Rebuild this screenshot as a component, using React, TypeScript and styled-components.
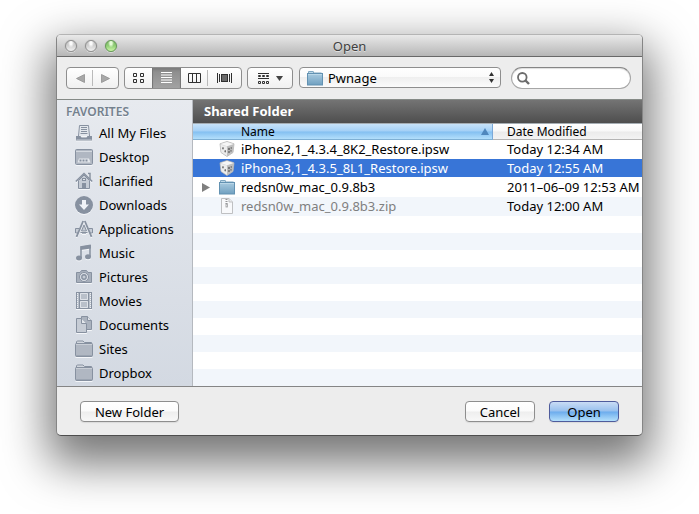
import React from "react";
import styled, { createGlobalStyle, css } from "styled-components";

const GlobalStyle = createGlobalStyle`
  * { box-sizing: border-box; }
  body { margin: 0; background: #fff; }
  body, button, input, select, table {
    font-family: "Lucida Grande", "Noto Sans", "Open Sans", sans-serif;
    font-size: 13px;
    line-height: 16px;
    color: #000;
  }
`;

const Page = styled.main`
  padding: 34px 56px 78px;
  overflow: hidden;
`;

const Dialog = styled.section`
  border: 1px solid #858585;
  border-top-color: #b4b4b4;
  border-bottom-color: #4e4e4e;
  border-radius: 5px;
  background: #ededed;
  overflow: hidden;
  box-shadow: 0 20px 46px 8px rgba(0, 0, 0, 0.54);
`;

const TitleBar = styled.header`
  display: grid;
  grid-template-columns: 1fr auto 1fr;
  align-items: center;
  height: 22px;
  padding: 0 8px;
  border-bottom: 1px solid #686868;
  background: linear-gradient(#e9e9e9, #b6b6b6);
`;

const Lights = styled.div`
  display: flex;
  gap: 8px;
`;

const Light = styled.button<{ $green?: boolean }>`
  width: 12px;
  height: 12px;
  padding: 0;
  border: 1px solid ${(p) => (p.$green ? "#639a54" : "#8f8f8f")};
  border-radius: 50%;
  background: ${(p) =>
    p.$green
      ? "radial-gradient(ellipse at 50% 20%, #e4fbd6 0 15%, transparent 42%), linear-gradient(#7db567, #92d077 50%, #cdf7a8)"
      : "radial-gradient(ellipse at 50% 20%, #fbfbfb 0 15%, transparent 42%), linear-gradient(#c0c0c0, #d2d2d2 50%, #f2f2f2)"};
  box-shadow: 0 0 1px rgba(0, 0, 0, 0.35), 0 1px 0 rgba(255, 255, 255, 0.5);
`;

const Title = styled.h1`
  margin: 0;
  font-size: 13px;
  font-weight: 400;
  line-height: 20px;
  color: #404040;
  text-shadow: 0 1px 0 rgba(255, 255, 255, 0.5);
`;

const Toolbar = styled.div`
  display: flex;
  align-items: flex-start;
  gap: 5px;
  height: 43px;
  padding: 10px 11px 0 9px;
  border-bottom: 1px solid #858a86;
`;

const Group = styled.div`
  display: flex;
  height: 22px;
  border: 1px solid #8e8e8e;
  border-radius: 4px;
  background: linear-gradient(#fff, #f0f0f0);
  overflow: hidden;
`;

const Segment = styled.button<{ $width: number; $on?: boolean; $rule?: boolean }>`
  display: flex;
  align-items: center;
  justify-content: center;
  gap: 7px;
  width: ${(p) => p.$width}px;
  padding: 0;
  border: 0;
  background: none;
  ${(p) =>
    p.$rule &&
    css`
      background: linear-gradient(#bababa, #bababa) right center / 1px 16px no-repeat;
    `}
  ${(p) =>
    p.$on &&
    css`
      background: linear-gradient(#8a8a8a, #a2a2a2);
      box-shadow: inset 1px 0 0 #777, inset -1px 0 0 #777, inset 0 2px 2px #7c7c7c;
    `}
`;

const PopUp = styled.div`
  display: grid;
  flex: 1;
  align-items: center;
  margin: 0 5px 0 1px;
  > * { grid-area: 1 / 1; }
  > svg { pointer-events: none; margin-left: 8px; }
  > svg:last-child { justify-self: end; margin-right: 6px; }
`;

const PopUpSelect = styled.select`
  appearance: none;
  width: 100%;
  height: 21px;
  padding: 0 22px 0 28px;
  border: 1px solid #8e8e8e;
  border-radius: 4px;
  background: linear-gradient(#fff, #fafafa 50%, #efefef 50%, #fbfbfb);
`;

const Search = styled.label`
  display: flex;
  align-items: center;
  gap: 4px;
  width: 120px;
  height: 22px;
  padding: 0 8px 0 5px;
  border: 1px solid #a6a6a6;
  border-top-color: #858585;
  border-radius: 11px;
  background: #fff;
  box-shadow: inset 0 1px 1px #ddd;
`;

const SearchInput = styled.input`
  flex: 1;
  min-width: 0;
  padding: 0;
  border: 0;
  outline: 0;
  background: none;
`;

const Panes = styled.div`
  display: flex;
  border-bottom: 1px solid #858585;
`;

const Sidebar = styled.nav`
  flex: none;
  width: 136px;
  padding-bottom: 1px;
  border-right: 1px solid #b5b9bf;
  background: linear-gradient(#e7eaef, #d3d9e2);
`;

const SidebarHeading = styled.h2`
  margin: 0;
  padding: 4px 0 1px 9px;
  font-size: 12px;
  font-weight: 600;
  line-height: 16px;
  color: #74818e;
  text-shadow: 0 1px 0 #f6f8fa;
`;

const Places = styled.ul`
  margin: 0;
  padding: 0;
  list-style: none;
`;

const Place = styled.a`
  display: flex;
  align-items: center;
  gap: 6px;
  height: 24px;
  padding-left: 18px;
  color: #000;
  text-decoration: none;
  svg { filter: drop-shadow(0 1px 0 #f4f6f9); }
`;

const Browser = styled.div`
  display: flex;
  flex: 1;
  min-width: 0;
  flex-direction: column;
  background: #fff;
`;

const BrowserTitle = styled.h2`
  margin: 0;
  padding: 0 11px;
  font-size: 13px;
  font-weight: 700;
  line-height: 23px;
  color: #fff;
  background: linear-gradient(#747474, #4e4e4e);
`;

const Files = styled.table`
  width: 100%;
  table-layout: fixed;
  border-collapse: separate;
  border-spacing: 0;
  th, td { padding: 0; text-align: left; white-space: nowrap; overflow: hidden; }
`;

const HeadCell = styled.th<{ $sorted?: boolean }>`
  height: 17px;
  border-top: 1px solid #a5adb3;
  border-bottom: 1px solid ${(p) => (p.$sorted ? "#7fb0d4" : "#b4b4b4")};
  font-size: 12px;
  font-weight: 400;
  line-height: 15px;
  background: ${(p) =>
    p.$sorted
      ? "linear-gradient(#c7e2f8, #a3d0f6 48%, #83bff1 52%, #b3dffb)"
      : "linear-gradient(#fff, #f8f8f8 48%, #ebebeb 52%, #f3f3f3)"};
`;

const HeadInner = styled.div<{ $name?: boolean }>`
  display: flex;
  align-items: center;
  justify-content: space-between;
  height: 15px;
  padding: ${(p) => (p.$name ? "0 3px 0 48px" : "0 0 0 14px")};
  ${(p) => p.$name && "border-right: 1px solid #7ba9d8;"}
`;

const NameColumn = styled.col`
  width: 300px;
`;

const FileRow = styled.tr<{ $selected?: boolean; $shaded?: boolean }>`
  height: 19px;
  color: ${(p) => (p.$selected ? "#fff" : "#000")};
  td {
    height: 19px;
    border-bottom: 1px solid ${(p) => (p.$shaded ? "#f2f6fb" : "#fff")};
    background: ${(p) => (p.$selected ? "#3875d7" : p.$shaded ? "#f2f6fb" : "#fff")};
  }
`;

const NameCell = styled.div<{ $dim?: boolean }>`
  display: flex;
  align-items: center;
  height: 18px;
  padding-left: 9px;
  color: ${(p) => (p.$dim ? "#7f7f7f" : "inherit")};
  > svg { flex: none; margin-right: 6px; opacity: ${(p) => (p.$dim ? 0.6 : 1)}; }
`;

const Disclosure = styled.button`
  display: flex;
  flex: none;
  width: 8px;
  margin-right: 9px;
  padding: 0;
  border: 0;
  background: none;
`;

const Indent = styled.span`
  flex: none;
  width: 17px;
`;

const DateCell = styled.td`
  && { padding-left: 14px; }
`;

const Stripes = styled.div`
  flex: 1;
  background: repeating-linear-gradient(#fff 0 17px, #f2f6fb 17px 34px);
`;

const Footer = styled.footer`
  display: flex;
  gap: 14px;
  height: 48px;
  padding: 14px 23px 0;
`;

const PushButton = styled.button<{ $primary?: boolean; $wide?: boolean }>`
  width: ${(p) => (p.$wide ? 99 : 70)}px;
  height: 21px;
  padding: 0;
  border: 1px solid ${(p) => (p.$primary ? "#4f5c9c" : "#8e8e8e")};
  border-radius: 4px;
  line-height: 18px;
  background: ${(p) =>
    p.$primary
      ? "linear-gradient(#c9dcf5, #97c0ee 48%, #6caced 52%, #b4e0fb)"
      : "linear-gradient(#fff, #fbfbfb 48%, #eeeeee 52%, #f8f8f8)"};
  box-shadow: 0 1px 1px rgba(0, 0, 0, 0.08);
  ${(p) => p.$wide && "margin-right: auto;"}
`;

const INK = "#8791a0";

const Gray = ({ children }: { children: React.ReactNode }) => (
  <svg width="18" height="18" viewBox="0 0 18 18" fill="none" stroke={INK} aria-hidden="true">
    {children}
  </svg>
);

const GrayFolder = () => (
  <Gray>
    <path d="M1.5 4V1.8L2.2 1H8L9.5 2.5H16.5V4" fill="#d2d7de" />
    <rect x="0.5" y="3.5" width="17" height="13" rx="0.8" fill="#b0b7c2" />
    <path d="M1 4.5H17" stroke="#c9ced6" />
    <path d="M1 16H17" />
  </Gray>
);

const places: { name: string; icon: React.ReactNode }[] = [
  {
    name: "All My Files",
    icon: (
      <Gray>
        <path d="M3.5 12L4.5 1.5H13.5L14.5 12" fill="#e3e7ec" />
        <path d="M6 3.5H12M6 5.5H12M6 7.5H12M5.5 9.5H12.5" />
        <path d="M1 12H5.5L6.5 13.5H11.5L12.5 12H17V16.5H1Z" fill={INK} stroke="none" />
        <path d="M1.5 15.5H16.5" stroke="#a7afbb" />
      </Gray>
    ),
  },
  {
    name: "Desktop",
    icon: (
      <Gray>
        <rect x="0.5" y="1.5" width="17" height="15" rx="1" fill="#b0b7c2" />
        <path d="M1 3.5H17" stroke="#d3d8df" />
        <path d="M4 10.5H14L15.5 14.5H2.5Z" fill="#e3e7ec" stroke="none" />
        <path d="M4.5 12.5H13.5" strokeWidth="2" strokeDasharray="2 1" />
      </Gray>
    ),
  },
  {
    name: "iClarified",
    icon: (
      <Gray>
        <path d="M13 1.5H15V7" strokeWidth="1.5" />
        <path d="M3.5 8.5L9 3L14.5 8.5V16.5H3.5Z" fill="#c6ccd5" />
        <path d="M0.8 9.5L9 1.5L17.2 9.5" strokeWidth="1.6" />
        <rect x="7.5" y="6.5" width="3" height="2" fill="#e3e7ec" />
        <rect x="7" y="11" width="4" height="6" fill={INK} stroke="none" />
      </Gray>
    ),
  },
  {
    name: "Downloads",
    icon: (
      <Gray>
        <circle cx="9" cy="9" r="9" fill={INK} stroke="none" />
        <path d="M7 4H11V8.5H14L9 14L4 8.5H7Z" fill="#f0f3f7" stroke="none" />
      </Gray>
    ),
  },
  {
    name: "Applications",
    icon: (
      <Gray>
        <path d="M4 8.5H0.5V13H3M14 8.5H17.5V13H15M5.5 12.5H12.5" fill="#c6ccd5" />
        <path d="M8.2 1L1.5 16.8M9.8 1L16.5 16.8" strokeWidth="1.8" />
        <path d="M9 5L11.5 11H6.5Z" fill="#c6ccd5" />
        <path d="M7 13.5H11" stroke="#b0b7c2" />
      </Gray>
    ),
  },
  {
    name: "Music",
    icon: (
      <Gray>
        <path d="M6 14V3L15 1.5V12.5" strokeWidth="1.6" />
        <path d="M5.5 2.5L16 1V4.5L5.5 6Z" fill={INK} stroke="none" />
        <ellipse cx="4" cy="14" rx="3" ry="2.5" fill={INK} stroke="none" />
        <ellipse cx="13" cy="12.7" rx="3" ry="2.5" fill={INK} stroke="none" />
      </Gray>
    ),
  },
  {
    name: "Pictures",
    icon: (
      <Gray>
        <path d="M1.5 4.5H5L6.5 2.5H11.5L13 4.5H16.5V14.5H1.5Z" fill="#a7afbb" strokeLinejoin="round" />
        <circle cx="9" cy="9" r="4.5" fill="#dfe3e9" />
        <circle cx="9" cy="9" r="2.2" fill="#c6ccd5" strokeWidth="1.4" />
      </Gray>
    ),
  },
  {
    name: "Movies",
    icon: (
      <Gray>
        <rect x="1.5" y="0.5" width="15" height="16" fill="#b9c0ca" />
        <path d="M2.5 1V16.5M15.5 1V16.5" stroke="#eef1f5" strokeDasharray="1 1" />
        <path d="M4.5 1V16M13.5 1V16M4 8.5H14" />
        <path d="M5.5 1.5H12.5V7.5H5.5ZM5.5 9.5H12.5V15.5H5.5Z" stroke="#dfe3e9" />
      </Gray>
    ),
  },
  {
    name: "Documents",
    icon: (
      <Gray>
        <path d="M6.5 0.5H12.5L16.5 4.5V13.5H6.5Z" fill="#aab2be" />
        <path d="M12.5 0.5V4.5H16.5" fill="#dfe3e9" />
        <path d="M1.5 2.5H6.5L11.5 7.5V16.5H1.5Z" fill="#c6ccd5" />
        <path d="M6.5 2.5V7.5H11.5" fill="#e3e7ec" />
      </Gray>
    ),
  },
  { name: "Sites", icon: <GrayFolder /> },
  { name: "Dropbox", icon: <GrayFolder /> },
];

const BlueFolder = () => (
  <svg width="16" height="16" viewBox="0 0 16 16" aria-hidden="true">
    <defs>
      <linearGradient id="folderFront" x1="0" y1="0" x2="0" y2="1">
        <stop offset="0" stopColor="#a9cbe0" />
        <stop offset="1" stopColor="#70a0c0" />
      </linearGradient>
    </defs>
    <path d="M1 4V2Q1 1 2 1H6Q7 1 7 2.5H14.5V5H1Z" fill="#80a8c2" />
    <path d="M2 2.5H6" stroke="#bdd8e8" />
    <rect x="0.5" y="3.5" width="15" height="11.5" fill="url(#folderFront)" stroke="#6392b2" />
    <path d="M1 4.5H15" stroke="#bad7e8" />
  </svg>
);

const Firmware = () => (
  <svg width="16" height="16" viewBox="0 0 16 16" aria-hidden="true">
    <path d="M8 0.5L15 2.8L14 11.5L8 15.5L2 11.5L1 2.8Z" fill="#d2d2d2" stroke="#b5b5b5" strokeWidth="0.8" />
    <path d="M8 1L14.5 3L8 5.3L1.5 3Z" fill="#f6f6f6" />
    <path d="M1.5 3.5L8 5.5V15L2.4 11.2Z" fill="#ececec" />
    <path d="M14.5 3.5L8 5.5V15L13.6 11.2Z" fill="#bebebe" />
    <ellipse cx="4" cy="7.2" rx="0.7" ry="1.2" fill="#666" />
    <ellipse cx="6.2" cy="10.2" rx="0.7" ry="1.2" fill="#666" />
    <ellipse cx="10" cy="8" rx="0.7" ry="1.2" fill="#444" />
    <ellipse cx="12.2" cy="7" rx="0.6" ry="1.1" fill="#666" />
    <ellipse cx="10" cy="11" rx="0.7" ry="1.1" fill="#444" />
    <ellipse cx="12" cy="9.8" rx="0.6" ry="1.1" fill="#666" />
  </svg>
);

const Archive = () => (
  <svg width="16" height="16" viewBox="0 0 16 16" fill="none" stroke="#9d9d9d" aria-hidden="true">
    <path d="M2.5 0.5H10L13.5 4V15.5H2.5Z" fill="#fcfcfc" />
    <path d="M10 0.5V4H13.5" fill="#e8e8e8" />
    <path d="M7.5 1V7" stroke="#555" strokeWidth="2" strokeDasharray="1 1" />
    <rect x="7" y="6" width="1.5" height="3" stroke="#666" strokeWidth="0.8" />
  </svg>
);

const files = [
  { name: "iPhone2,1_4.3.4_8K2_Restore.ipsw", date: "Today 12:34 AM", icon: <Firmware /> },
  { name: "iPhone3,1_4.3.5_8L1_Restore.ipsw", date: "Today 12:55 AM", icon: <Firmware />, selected: true },
  { name: "redsn0w_mac_0.9.8b3", date: "2011–06–09 12:53 AM", icon: <BlueFolder />, folder: true },
  { name: "redsn0w_mac_0.9.8b3.zip", date: "Today 12:00 AM", icon: <Archive />, dim: true, shaded: true },
];

export default function App() {
  return (
    <>
      <GlobalStyle />
      <Page>
        <Dialog role="dialog" aria-labelledby="dialog-title">
          <TitleBar>
            <Lights>
              <Light aria-label="Close" />
              <Light aria-label="Minimize" />
              <Light aria-label="Zoom" $green />
            </Lights>
            <Title id="dialog-title">Open</Title>
          </TitleBar>

          <Toolbar>
            <Group>
              <Segment $width={26} $rule aria-label="Back">
                <svg width="9" height="9" viewBox="0 0 9 9"><path d="M0.5 4.5L8.5 0.5V8.5Z" fill="#a8a8a8" stroke="#909090" strokeWidth="0.8" /></svg>
              </Segment>
              <Segment $width={25} aria-label="Forward">
                <svg width="9" height="9" viewBox="0 0 9 9"><path d="M8.5 4.5L0.5 0.5V8.5Z" fill="#a8a8a8" stroke="#909090" strokeWidth="0.8" /></svg>
              </Segment>
            </Group>
            <Group>
              <Segment $width={27} aria-label="Icons">
                <svg width="11" height="10" viewBox="0 0 11 10" fill="none" stroke="#303030">
                  <path d="M0.5 0.5H3.5V3.5H0.5ZM7.5 0.5H10.5V3.5H7.5ZM0.5 6.5H3.5V9.5H0.5ZM7.5 6.5H10.5V9.5H7.5Z" />
                </svg>
              </Segment>
              <Segment $width={29} $on aria-label="List" aria-pressed="true">
                <svg width="11" height="12" viewBox="0 0 11 12" stroke="#fff">
                  <path d="M0 0.5H11M0 3H11M0 5.5H11M0 8H11M0 10.5H11" />
                </svg>
              </Segment>
              <Segment $width={27} $rule aria-label="Columns">
                <svg width="13" height="10" viewBox="0 0 13 10" fill="none" stroke="#303030">
                  <path d="M0.5 0.5H12.5V9.5H0.5ZM4.5 0V10M8.5 0V10" />
                </svg>
              </Segment>
              <Segment $width={33} aria-label="Cover Flow">
                <svg width="15" height="10" viewBox="0 0 15 10" fill="none" stroke="#303030">
                  <path d="M0.5 0V10M2.5 1V9M12.5 1V9M14.5 0V10" />
                  <rect x="4.5" y="1.5" width="6" height="7" fill="#6a6a6a" />
                </svg>
              </Segment>
            </Group>
            <Group>
              <Segment $width={44} aria-label="Arrange">
                <svg width="11" height="11" viewBox="0 0 11 11" fill="none" stroke="#303030">
                  <path d="M0 0.5H11M0 5.5H11" />
                  <path d="M0.5 2.5H2.5V3.5H0.5ZM4.5 2.5H6.5V3.5H4.5ZM8.5 2.5H10.5V3.5H8.5ZM0.5 8.5H2.5V10.5H0.5ZM4.5 8.5H6.5V10.5H4.5ZM8.5 8.5H10.5V10.5H8.5Z" />
                </svg>
                <svg width="7" height="5" viewBox="0 0 7 5"><path d="M0 0H7L3.5 5Z" fill="#444" /></svg>
              </Segment>
            </Group>
            <PopUp>
              <PopUpSelect aria-label="Folder" defaultValue="Pwnage">
                <option>Pwnage</option>
              </PopUpSelect>
              <BlueFolder />
              <svg width="7" height="11" viewBox="0 0 7 11" fill="#333" aria-hidden="true">
                <path d="M3.5 0L6 4H1ZM3.5 11L6 7H1Z" />
              </svg>
            </PopUp>
            <Search>
              <svg width="13" height="13" viewBox="0 0 13 13" fill="none" stroke="#6c6c6c" aria-hidden="true">
                <circle cx="5.3" cy="5.3" r="4.3" strokeWidth="1.8" />
                <path d="M8.5 8.5L12 12" strokeWidth="2.4" />
              </svg>
              <SearchInput type="search" aria-label="Search" />
            </Search>
          </Toolbar>

          <Panes>
            <Sidebar aria-label="Favorites">
              <SidebarHeading>FAVORITES</SidebarHeading>
              <Places>
                {places.map((place) => (
                  <li key={place.name}>
                    <Place href="#">
                      {place.icon}
                      {place.name}
                    </Place>
                  </li>
                ))}
              </Places>
            </Sidebar>

            <Browser>
              <BrowserTitle>Shared Folder</BrowserTitle>
              <Files>
                <colgroup>
                  <NameColumn />
                  <col />
                </colgroup>
                <thead>
                  <tr>
                    <HeadCell $sorted scope="col" aria-sort="ascending">
                      <HeadInner $name>
                        Name
                        <svg width="8" height="7" viewBox="0 0 8 7"><path d="M4 0L8 7H0Z" fill="#4f87bd" /></svg>
                      </HeadInner>
                    </HeadCell>
                    <HeadCell scope="col">
                      <HeadInner>Date Modified</HeadInner>
                    </HeadCell>
                  </tr>
                </thead>
                <tbody>
                  {files.map((file) => (
                    <FileRow key={file.name} $selected={file.selected} $shaded={file.shaded}>
                      <td>
                        <NameCell $dim={file.dim}>
                          {file.folder ? (
                            <Disclosure aria-label="Expand folder">
                              <svg width="8" height="9" viewBox="0 0 8 9"><path d="M0 0L8 4.5L0 9Z" fill="#7f7f7f" /></svg>
                            </Disclosure>
                          ) : (
                            <Indent />
                          )}
                          {file.icon}
                          {file.name}
                        </NameCell>
                      </td>
                      <DateCell>{file.date}</DateCell>
                    </FileRow>
                  ))}
                </tbody>
              </Files>
              <Stripes />
            </Browser>
          </Panes>

          <Footer>
            <PushButton $wide>New Folder</PushButton>
            <PushButton>Cancel</PushButton>
            <PushButton $primary>Open</PushButton>
          </Footer>
        </Dialog>
      </Page>
    </>
  );
}
